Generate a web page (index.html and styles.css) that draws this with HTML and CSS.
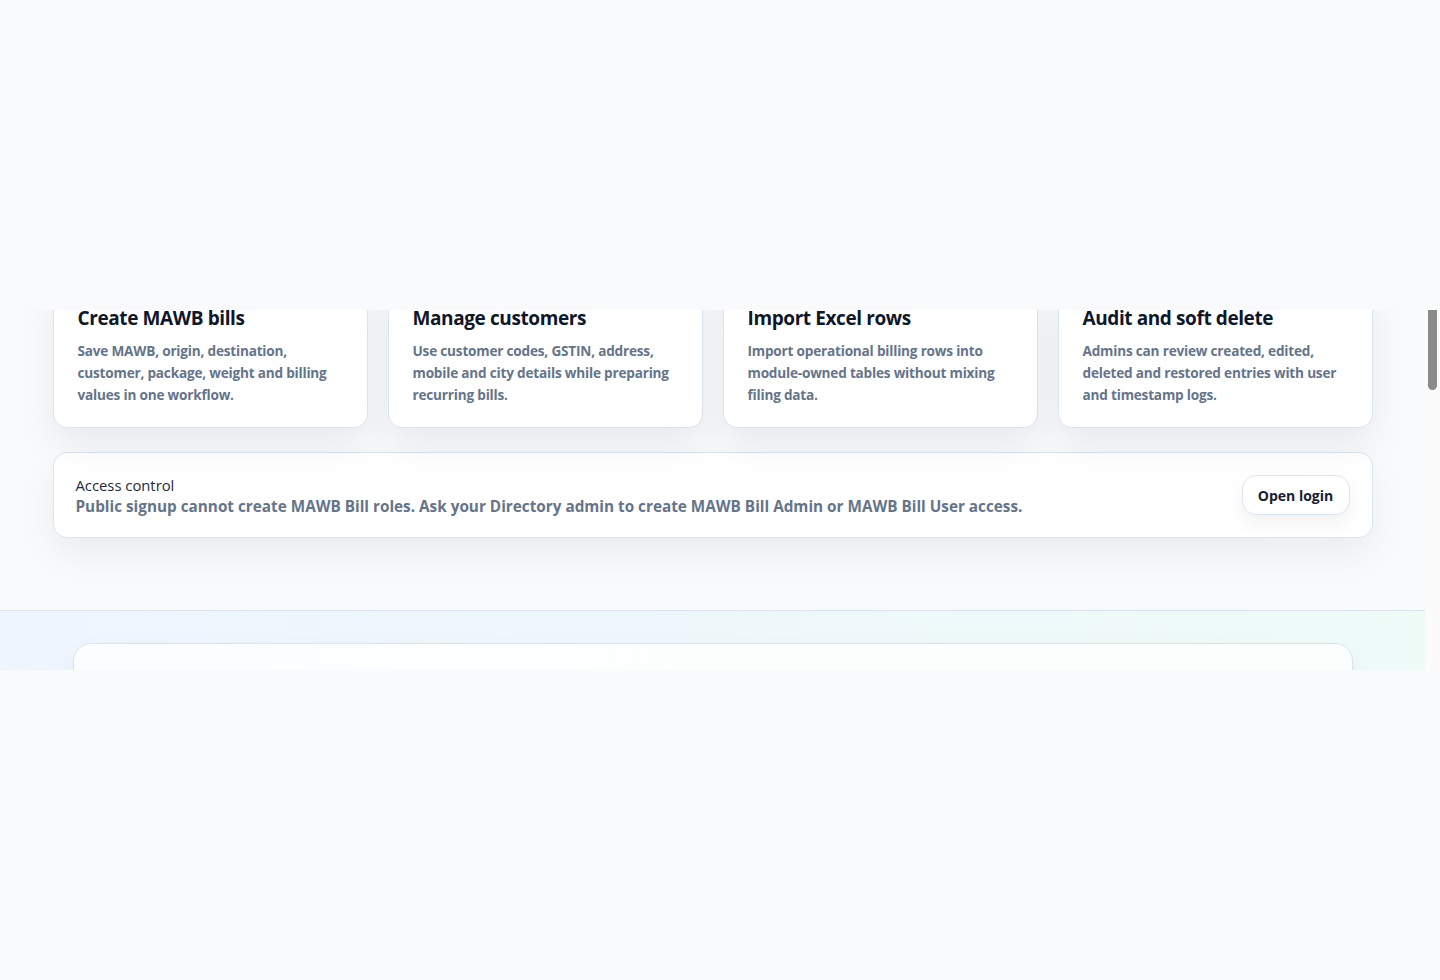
FILE: index.html
```html
<!DOCTYPE html>
<html lang="en">
<head>
    <meta charset="UTF-8">
    <meta name="viewport" content="width=device-width, initial-scale=1.0">
    <title>MAWB Bill</title>
    <link rel="stylesheet" href="styles.css">
</head>
<body>
    <div class="screen-gap"></div>

    <div class="frame">
        <div class="frame-page">
            <section class="features">
                <div class="container">
                    <div class="feature-grid">
                        <article class="feature-card">
                            <h3>Create MAWB bills</h3>
                            <p>Save MAWB, origin, destination, customer, package, weight and billing values in one workflow.</p>
                        </article>
                        <article class="feature-card">
                            <h3>Manage customers</h3>
                            <p>Use customer codes, GSTIN, address, mobile and city details while preparing recurring bills.</p>
                        </article>
                        <article class="feature-card">
                            <h3>Import Excel rows</h3>
                            <p>Import operational billing rows into module-owned tables without mixing filing data.</p>
                        </article>
                        <article class="feature-card">
                            <h3>Audit and soft delete</h3>
                            <p>Admins can review created, edited, deleted and restored entries with user and timestamp logs.</p>
                        </article>
                    </div>

                    <div class="access-card">
                        <div class="access-text">
                            <div class="access-label">Access control</div>
                            <strong>Public signup cannot create MAWB Bill roles. Ask your Directory admin to create MAWB Bill Admin or MAWB Bill User access.</strong>
                        </div>
                        <a class="btn-login" href="#">Open login</a>
                    </div>
                </div>
            </section>

            <section class="next-section">
                <div class="next-card"></div>
            </section>
        </div>

        <div class="scroll-track">
            <div class="scroll-thumb"></div>
        </div>
    </div>
</body>
</html>
```

FILE: styles.css
```css
html, body {
    margin: 0;
    padding: 0;
}
body {
    font-family: 'Open Sans', 'Noto Sans', sans-serif;
    background-color: #f8fafc;
    color: #0f172a;
    height: 980px;
    overflow: hidden;
}
.screen-gap {
    height: 310px;
}
.frame {
    display: flex;
    height: 360px;
    overflow: hidden;
}
.frame-page {
    flex: 1;
    min-width: 0;
}
.scroll-track {
    width: 15px;
    background-color: #fbfbfb;
}
.scroll-thumb {
    width: 9px;
    height: 80px;
    margin-left: 3px;
    background-color: #8b8b8b;
    border-radius: 0 0 5px 5px;
}
.container {
    width: 1320px;
    margin: 0 auto;
}
.features {
    padding-bottom: 72px;
}
.feature-grid {
    display: grid;
    grid-template-columns: repeat(4, 1fr);
    gap: 20px;
    margin-top: -31px;
}
.feature-card {
    background-color: #fff;
    border: 1px solid #dbe5f1;
    border-radius: 14px;
    padding: 30px 24px 21px;
    box-shadow: 0 16px 36px rgba(15, 23, 42, 0.07);
}
.feature-card h3 {
    margin: 0 0 13px;
    font-size: 19px;
    line-height: 17px;
    font-weight: 700;
    letter-spacing: -0.4px;
    color: #0f172a;
}
.feature-card p {
    margin: 0;
    font-size: 13.6px;
    line-height: 22px;
    font-weight: 700;
    letter-spacing: -0.2px;
    color: #64748b;
}
.access-card {
    display: flex;
    align-items: center;
    justify-content: space-between;
    gap: 24px;
    margin-top: 24px;
    padding: 22px 22px 20px 22px;
    background-color: #fff;
    border: 1px solid #dbe5f1;
    border-radius: 14px;
    box-shadow: 0 16px 36px rgba(15, 23, 42, 0.06);
}
.access-label {
    font-size: 14.8px;
    line-height: 21px;
    color: #1e293b;
}
.access-text strong {
    display: block;
    font-size: 15.3px;
    line-height: 21px;
    font-weight: 700;
    color: #64748b;
}
.btn-login {
    display: flex;
    align-items: center;
    justify-content: center;
    width: 108px;
    height: 40px;
    margin-top: -2px;
    box-sizing: border-box;
    border: 1px solid #dbe5f1;
    border-radius: 14px;
    background-color: #fff;
    color: #172033;
    font-size: 14px;
    font-weight: 700;
    text-decoration: none;
    box-shadow: 0 8px 20px rgba(15, 23, 42, 0.06);
}
.next-section {
    border-top: 1px solid #dbe3ef;
    padding-top: 32px;
    background: linear-gradient(90deg, #eef5ff, #eefbf7);
}
.next-card {
    width: 1280px;
    height: 300px;
    margin: 0 auto;
    box-sizing: border-box;
    border: 1px solid #dbe3ef;
    border-radius: 18px;
    background-color: rgba(255, 255, 255, 0.8);
    box-shadow: 0 16px 36px rgba(15, 23, 42, 0.05);
}
```
